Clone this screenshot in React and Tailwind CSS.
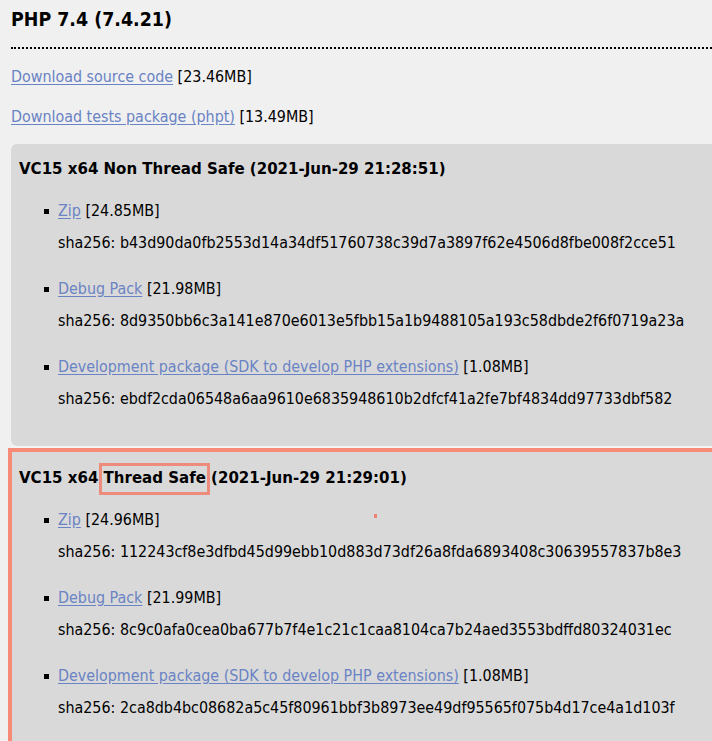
import React from "react";

const builds = [
  {
    title: (
      <>VC15 x64 Non Thread Safe (2021-Jun-29 21:28:51)</>
    ),
    files: [
      { name: "Zip", size: "24.85MB", sha: "b43d90da0fb2553d14a34df51760738c39d7a3897f62e4506d8fbe008f2cce51" },
      { name: "Debug Pack", size: "21.98MB", sha: "8d9350bb6c3a141e870e6013e5fbb15a1b9488105a193c58dbde2f6f0719a23a" },
      { name: "Development package (SDK to develop PHP extensions)", size: "1.08MB", sha: "ebdf2cda06548a6aa9610e6835948610b2dfcf41a2fe7bf4834dd97733dbf582" },
    ],
  },
  {
    highlight: true,
    title: (
      <>
        VC15 x64{" "}
        <span className="relative">
          Thread Safe
          <span className="absolute left-[-5px] right-[-4px] top-[-4px] bottom-[-8px] border-[3px] border-[#ee8372]/90"></span>
        </span>{" "}
        (2021-Jun-29 21:29:01)
      </>
    ),
    files: [
      { name: "Zip", size: "24.96MB", sha: "112243cf8e3dfbd45d99ebb10d883d73df26a8fda6893408c30639557837b8e3" },
      { name: "Debug Pack", size: "21.99MB", sha: "8c9c0afa0cea0ba677b7f4e1c21c1caa8104ca7b24aed3553bdffd80324031ec" },
      { name: "Development package (SDK to develop PHP extensions)", size: "1.08MB", sha: "2ca8db4bc08682a5c45f80961bbf3b8973ee49df95565f075b4d17ce4a1d103f" },
    ],
  },
];

function Link({ children }) {
  return <a href="#" className="text-[#6a83c4] underline underline-offset-2">{children}</a>;
}

function Build({ build }) {
  return (
    <div
      className={
        build.highlight
          ? "relative bg-[#d9d9d9] border-t-4 border-l-4 border-[#f88a78] ml-[-3px] pl-[7px] pt-[13px] pb-6"
          : "bg-[#d9d9d9] rounded-tl-[6px] rounded-bl-[6px] pl-[8px] pt-[12px] pb-[35px]"
      }
    >
      <h4 className="font-bold text-[16.7px] leading-[24px]">{build.title}</h4>
      <ul className="mt-[19px] pl-[39px] flex flex-col gap-[22px]">
        {build.files.map((f) => (
          <li key={f.name} className="flex flex-col gap-[8px]">
            <div className="flex items-center leading-[24px]">
              <span className="w-[5px] h-[5px] bg-black mr-[9px] ml-[-14px]"></span>
              <Link>{f.name}</Link>
              <span>&nbsp;[{f.size}]</span>
            </div>
            <div className="leading-[24px] whitespace-nowrap">sha256: {f.sha}</div>
          </li>
        ))}
      </ul>
      {build.highlight && (
        <span className="absolute left-[362px] top-[62px] w-[3px] h-[4px] bg-[#ee8372]"></span>
      )}
    </div>
  );
}

export default function App() {
  return (
    <div className="min-h-screen bg-[#f0f0f0] text-black font-['DejaVu_Sans_Condensed','DejaVu_Sans',sans-serif] text-[15.9px] pl-[11px] pt-[7px] overflow-hidden">
      <h3 className="font-bold text-[19.4px] leading-[26px]">PHP 7.4 (7.4.21)</h3>
      <div className="mt-[14px] border-t-2 border-dotted border-black"></div>
      <p className="mt-[16px] leading-[24px]">
        <Link>Download source code</Link> [23.46MB]
      </p>
      <p className="mt-[16px] leading-[24px]">
        <Link>Download tests package (phpt)</Link> [13.49MB]
      </p>
      <div className="mt-[15px] flex flex-col">
        <Build build={builds[0]} />
        <div className="h-[2px] bg-[#f4f4f4]"></div>
        <Build build={builds[1]} />
      </div>
    </div>
  );
}
